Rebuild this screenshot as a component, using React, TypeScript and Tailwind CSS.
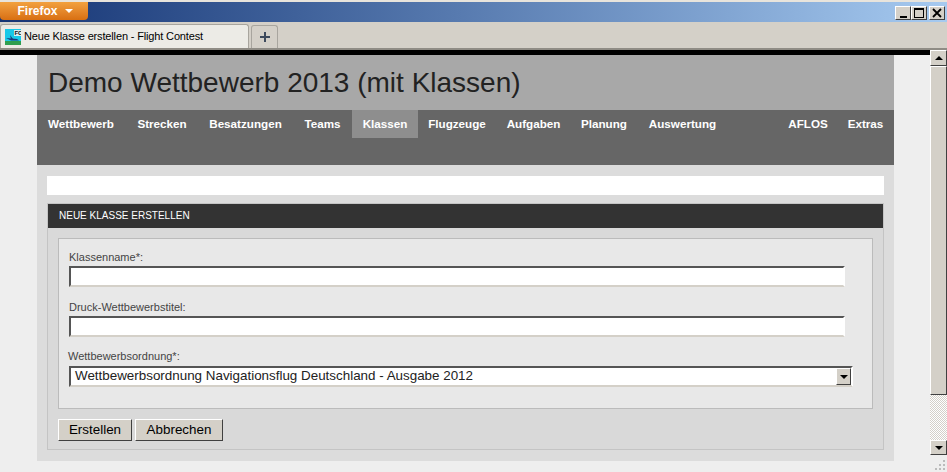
const leftNav = [
  { label: "Wettbewerb", width: "w-[90px]" },
  { label: "Strecken", width: "w-[72px]" },
  { label: "Besatzungen", width: "w-[95px]" },
  { label: "Teams", width: "w-[59px]" },
  { label: "Klassen", width: "w-[66px]" },
  { label: "Flugzeuge", width: "w-[78px]" },
  { label: "Aufgaben", width: "w-[75px]" },
  { label: "Planung", width: "w-[66px]" },
  { label: "Auswertung", width: "w-[91px]" },
];

const bevel = "border border-t-white border-l-white border-r-[#404040] border-b-[#404040]";
const sunken = "border-2 border-t-[#555] border-l-[#555] border-r-white border-b-[#d4d0c8]";

function WindowButton({ children }: { children: React.ReactNode }) {
  return (
    <div className={`flex h-[14px] w-[16px] items-center justify-center bg-[#d4d0c8] ${bevel}`}>
      {children}
    </div>
  );
}

function FcIcon() {
  return (
    <svg width="16" height="16" viewBox="0 0 16 16" className="shrink-0">
      <rect width="16" height="16" fill="#19c8e8" />
      <rect y="12" width="16" height="4" fill="#2f9e4f" />
      <path d="M1 9 L12 10 L14 11.5 L6 11.5 Z" fill="#1a3a7a" />
      <path d="M5 6 L8 10 L6 10 Z" fill="#1a3a7a" />
      <rect x="9" y="1" width="7" height="6" fill="#d8eef4" />
      <text x="9.5" y="6" fontSize="6" fontWeight="700" fill="#111" fontFamily="Liberation Sans, sans-serif">FC</text>
    </svg>
  );
}

function Field({ label, marginTop }: { label: string; marginTop: string }) {
  return (
    <div className={marginTop}>
      <div className="h-[16px] text-[11px] leading-[16px] text-[#444]">{label}</div>
      <div className={`mt-[1px] h-[21px] w-[776px] bg-white ${sunken}`} />
    </div>
  );
}

function Scrollbar() {
  return (
    <div className="flex w-[17px] shrink-0 flex-col">
      <div className={`flex h-[16px] items-center justify-center bg-[#d4d0c8] ${bevel}`}>
        <div className="h-0 w-0 border-x-4 border-b-4 border-x-transparent border-b-black" />
      </div>
      <div className={`h-[329px] bg-[#d4d0c8] ${bevel}`} />
      <div className="flex-1 bg-[repeating-conic-gradient(#d4d0c8_0%_25%,#ffffff_0%_50%)] bg-[length:2px_2px]" />
      <div className={`flex h-[15px] items-center justify-center bg-[#d4d0c8] ${bevel}`}>
        <div className="h-0 w-0 border-x-4 border-t-4 border-x-transparent border-t-black" />
      </div>
      <div className="relative h-[17px] bg-[#eeeeee]">
        <div className="absolute bottom-[2px] right-[2px] h-[2px] w-[2px] bg-[#bbb] shadow-[-4px_0_0_#bbb,-8px_0_0_#bbb,0_-4px_0_#bbb,-4px_-4px_0_#bbb,0_-8px_0_#bbb]" />
      </div>
    </div>
  );
}

export default function App() {
  return (
    <div className="flex h-[472px] w-[947px] flex-col overflow-hidden bg-[#eeeeee] font-['Liberation_Sans',Arial,sans-serif]">
      {/* Title bar */}
      <div className="h-[2px] bg-[#e8e4dc]" />
      <div className="flex h-[20px] items-start justify-between bg-gradient-to-r from-[#163474] to-[#a6caf0]">
        <div className="flex h-[18px] w-[88px] items-center justify-center gap-[7px] rounded-b-[4px] bg-gradient-to-b from-[#f2a13e] to-[#d86f10] pl-[2px] text-[12px] font-bold text-white">
          Firefox
          <div className="h-0 w-0 border-x-[4px] border-t-[4px] border-x-transparent border-t-white" />
        </div>
        <div className="mt-[4px] flex gap-[2px] pr-[2px]">
          <div className="flex">
            <WindowButton>
              <div className="mt-[7px] h-[2px] w-[7px] bg-black" />
            </WindowButton>
            <WindowButton>
              <div className="h-[10px] w-[10px] border border-t-2 border-black" />
            </WindowButton>
          </div>
          <WindowButton>
            <svg width="10" height="10" viewBox="0 0 10 10">
              <path d="M1 1L9 9M9 1L1 9" stroke="#000" strokeWidth="1.8" />
            </svg>
          </WindowButton>
        </div>
      </div>

      {/* Tab strip */}
      <div className="flex h-[26px] items-end gap-[2px] bg-[#d4d0c8]">
        <div className="flex h-[24px] w-[249px] items-center gap-[3px] rounded-t-[3px] border border-b-0 border-[#a8a59e] bg-[#ecebe6] pl-[4px] text-[11px] tracking-[-0.15px] text-black">
          <FcIcon />
          Neue Klasse erstellen - Flight Contest
        </div>
        <div className="flex h-[23px] w-[27px] items-center justify-center rounded-t-[3px] border border-b-0 border-[#a8a59e] bg-[#d4d0c8]">
          <svg width="12" height="12" viewBox="0 0 12 12">
            <path d="M6 1V11M1 6H11" stroke="#3d4a5c" strokeWidth="2" />
          </svg>
        </div>
      </div>
      <div className="h-[2px] bg-[#8f8c85]" />

      {/* Viewport */}
      <div className="flex min-h-0 flex-1">
        <div className="flex-1">
          <div className="h-[5px] bg-black" />
          <div className="pl-[37px] pr-[36px]">
            <div className="h-[406px] bg-[#dcdcdc]">
              <div className="flex h-[55px] items-center bg-[#a8a8a8] pl-[11px] pt-[1px] text-[28px] text-[#222]">
                Demo Wettbewerb 2013 (mit Klassen)
              </div>
              <div className="flex h-[55px] justify-between bg-[#666666] text-[11.67px] font-bold text-white">
                <div className="-ml-px flex h-[28px]">
                  {leftNav.map((item) => (
                    <div
                      key={item.label}
                      className={`flex items-center justify-center ${item.width} ${item.label === "Klassen" ? "bg-[#8e8e8e]" : ""}`}
                    >
                      {item.label}
                    </div>
                  ))}
                </div>
                <div className="flex h-[28px]">
                  <div className="flex w-[58px] items-center justify-center">AFLOS</div>
                  <div className="flex w-[57px] items-center justify-center">Extras</div>
                </div>
              </div>

              <div className="px-[10px] pt-[11px]">
                <div className="h-[19px] bg-white" />
                <div className="mt-[8px] h-[247px] border border-[#c4c4c4] bg-[#d9d9d9]">
                  <div className="flex h-[24px] items-center bg-[#333333] pb-[1px] pl-[11px] text-[10px] text-white">
                    NEUE KLASSE ERSTELLEN
                  </div>
                  <div className="mx-[10px] mt-[10px] h-[171px] border border-[#bbbbbb] bg-[#e8e8e8] px-[10px] pt-[10px]">
                    <Field label="Klassenname*:" marginTop="mt-0" />
                    <Field label="Druck-Wettbewerbstitel:" marginTop="mt-[12px]" />
                    <div className="-ml-px mt-[11px] h-[16px] text-[11px] leading-[16px] text-[#444]">Wettbewerbsordnung*:</div>
                    <div className={`mt-[2px] flex h-[21px] w-[784px] items-center justify-between bg-white pl-[4px] text-[13.4px] text-[#222] ${sunken}`}>
                      Wettbewerbsordnung Navigationsflug Deutschland - Ausgabe 2012
                      <div className={`flex h-[17px] w-[15px] items-center justify-center bg-[#d4d0c8] ${bevel}`}>
                        <div className="h-0 w-0 border-x-[4px] border-t-[4px] border-x-transparent border-t-black" />
                      </div>
                    </div>
                  </div>
                  <div className="mx-[10px] mt-[10px] flex gap-[3px]">
                    <button className={`h-[22px] w-[74px] bg-[#d4d0c8] text-[13.4px] text-black ${bevel}`}>Erstellen</button>
                    <button className={`h-[22px] w-[88px] bg-[#d4d0c8] text-[13.4px] text-black ${bevel}`}>Abbrechen</button>
                  </div>
                </div>
              </div>
            </div>
          </div>
        </div>
        <Scrollbar />
      </div>
    </div>
  );
}
